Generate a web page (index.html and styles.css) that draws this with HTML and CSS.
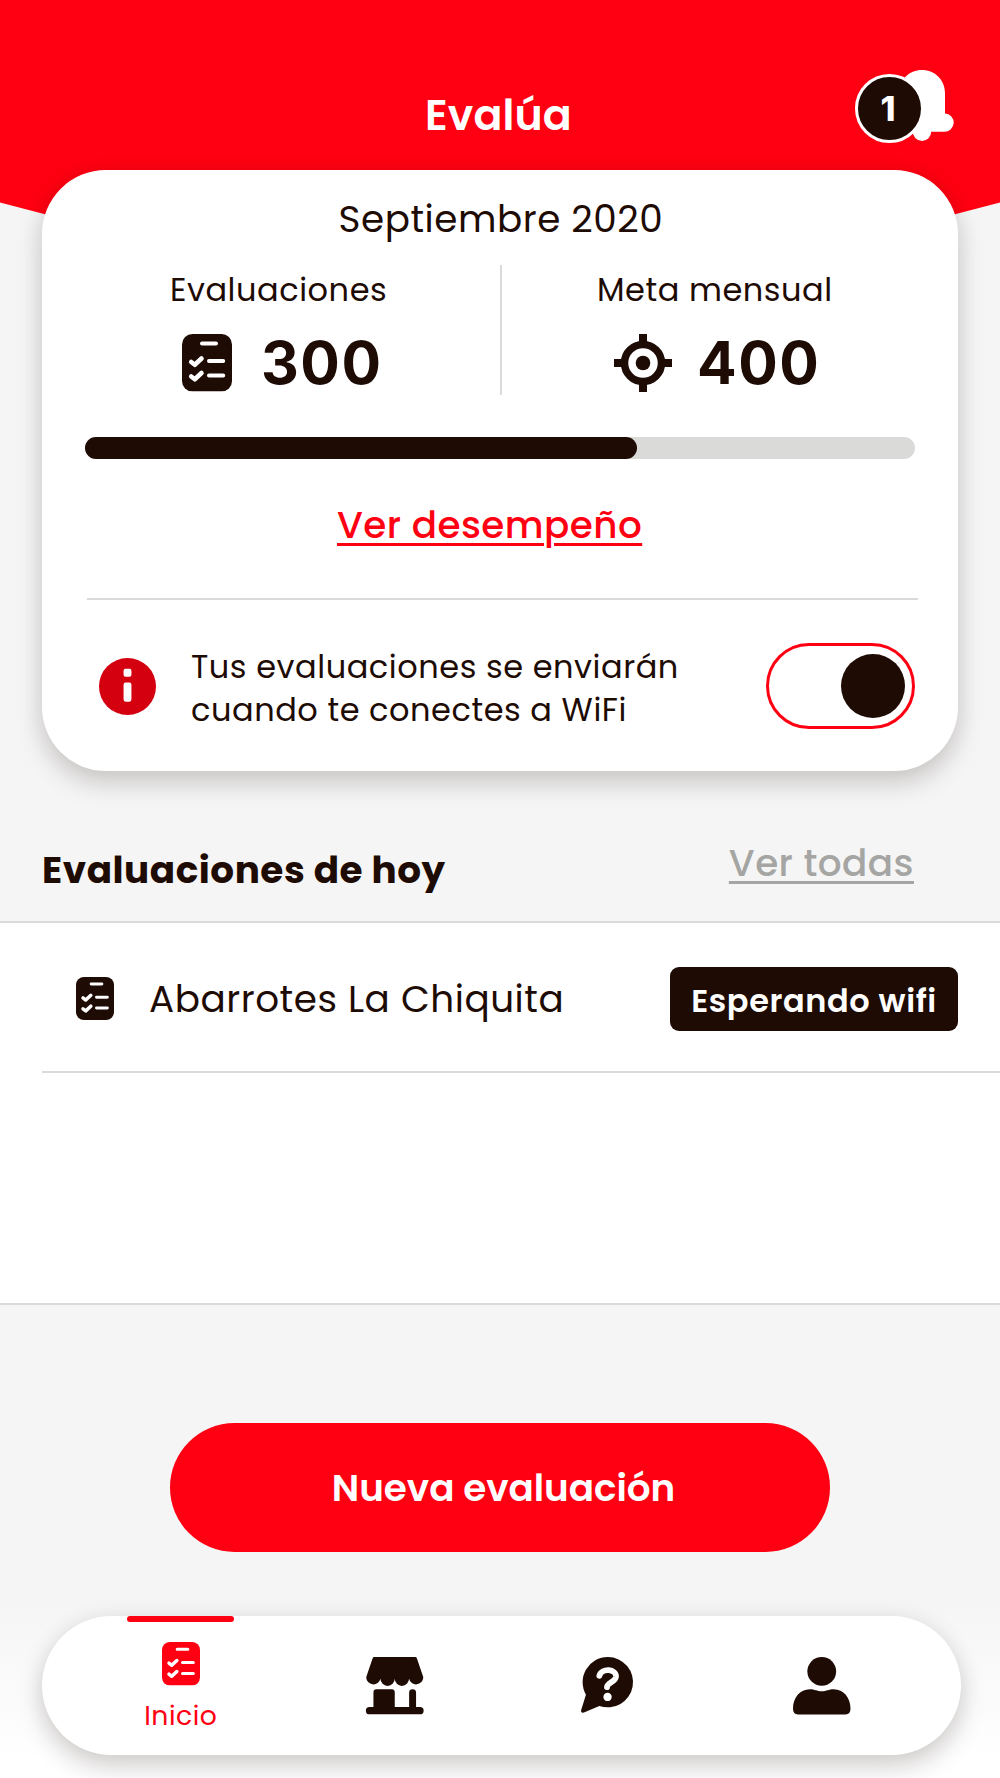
FILE: index.html
```html
<!DOCTYPE html>
<html lang="es">
<head>
<meta charset="utf-8">
<title>Evalúa</title>
<link rel="stylesheet" href="styles.css">
</head>
<body>
<svg class="sprite" aria-hidden="true">
  <symbol id="checklist" viewBox="0 0 50 57.5" preserveAspectRatio="none">
    <rect width="50" height="57.5" rx="10.5" fill="currentColor"/>
    <g fill="none" stroke="#fff" stroke-linecap="round" stroke-linejoin="round">
      <path d="M20 9.500H34M27 27H41.200M27 41.500H41.200" stroke-width="4"/>
      <path d="M9.200 28L12.800 30.800L19.500 24.500M9.200 42.500L12.800 45.300L19.500 39" stroke-width="4.600"/>
    </g>
  </symbol>
</svg>
<div class="screen">
  <header class="header">
    <h1 class="title">Evalúa</h1>
    <div class="bell">
      <svg class="bell-icon" viewBox="0 0 62 72" fill="#fff"><path d="M31 0C18 0 8 10 8 23V43.500A9 9 0 0 0 9 61.800H21.800A9.200 9.200 0 0 0 40.200 61.800H53A9.200 9.200 0 0 0 54 43.400V23C54 10 44 0 31 0Z"/></svg>
      <span class="badge">1</span>
    </div>
  </header>

  <section class="card">
    <h2 class="month">Septiembre 2020</h2>
    <div class="stats">
      <div class="stat">
        <div class="stat-label">Evaluaciones</div>
        <div class="stat-value"><svg class="i-check"><use href="#checklist"/></svg><span class="number">300</span></div>
      </div>
      <div class="stat stat-goal">
        <div class="stat-label">Meta mensual</div>
        <div class="stat-value">
          <svg class="i-target" viewBox="0 0 58 58"><path d="M29 0V10M29 48V58M0 29H10M48 29H58" stroke="currentColor" stroke-width="8"/><circle cx="29" cy="29" r="18.500" fill="none" stroke="currentColor" stroke-width="7.500"/><circle cx="29" cy="29" r="7.300" fill="currentColor"/></svg>
          <span class="number">400</span>
        </div>
      </div>
    </div>
    <div class="progress"><div class="progress-fill" style="width:66.5%"></div></div>
    <a class="performance">Ver desempeño</a>
    <div class="notice">
      <svg class="i-info" viewBox="0 0 58 58"><circle cx="29" cy="29" r="29" fill="#d40010"/><path d="M27 11H31Q33 11 33 13V17Q33 19 31 19H27Q25 19 25 17V13Q25 11 27 11ZM27 25H31Q33 25 33 27V42Q33 44.500 31 44.500H27Q25 44.500 25 42V27Q25 25 27 25Z" fill="#fff"/></svg>
      <p class="notice-text">Tus evaluaciones se enviarán<br>cuando te conectes a WiFi</p>
      <div class="toggle"><div class="knob"></div></div>
    </div>
  </section>

  <div class="section-head">
    <h2 class="today">Evaluaciones de hoy</h2>
    <a class="all">Ver todas</a>
  </div>
  <div class="list">
    <div class="row">
      <svg class="i-row"><use href="#checklist"/></svg>
      <span class="row-name">Abarrotes La Chiquita</span>
      <span class="status">Esperando wifi</span>
    </div>
  </div>

  <button class="cta">Nueva evaluación</button>

  <nav class="nav">
    <a class="tab tab-active"><svg class="i-tab"><use href="#checklist"/></svg><span class="tab-label">Inicio</span></a>
    <a class="tab"><svg viewBox="0 0 58 58" class="i-nav" fill="currentColor"><path d="M8.500 0H49.500Q51 0 51.400 1.400L57.800 20.500A7.300 7.300 0 0 1 43.400 22A7.200 7.200 0 0 1 29 22A7.200 7.200 0 0 1 14.600 22A7.300 7.300 0 0 1 .2 20.500L6.600 1.400Q7 0 8.500 0Z"/><path d="M7.500 35.500Q7.500 32.500 10.500 32.500H26Q29 32.500 29 35.500V50.500H43.500V36A3.500 3.500 0 0 1 50.500 36V50.500H54.500A3.600 3.600 0 0 1 54.500 57.800H3.500A3.600 3.600 0 0 1 3.500 50.500H7.500Z"/></svg></a>
    <a class="tab"><svg viewBox="0 0 58 58" class="i-nav" fill="currentColor"><path d="M29.200 0A25.400 25.400 0 1 1 20.500 49.300L5 56Q1.600 56.800 2.200 53.500L7 38A25.400 25.400 0 0 1 29.200 0Z"/><path d="M20.500 19C23 10.500 38 12 37.300 20C36.500 25.500 28.500 25.500 28.200 30.500" fill="none" stroke="#fff" stroke-width="5.800" stroke-linecap="round"/><circle cx="28.800" cy="40.300" r="4.200" fill="#fff"/></svg></a>
    <a class="tab"><svg viewBox="0 0 58 58" class="i-nav" fill="currentColor"><circle cx="29" cy="14.500" r="14.500"/><path d="M0 52C0 41 7 32.500 17 32.500C22 32.500 24 34.500 29 34.500C34 34.500 36 32.500 41 32.500C51 32.500 58 41 58 52Q58 58 53 58H5Q0 58 0 52Z"/></svg></a>
  </nav>
</div>
</body>
</html>
```
FILE: styles.css
```css
* { box-sizing: border-box; }
body { margin: 0; font-family: Poppins, Inter, sans-serif; color: #1d0b04; }
h1, h2, p { margin: 0; font-weight: 400; }
.sprite { position: absolute; width: 0; height: 0; }
svg { display: block; flex: none; overflow: visible; }
.screen { width: 1000px; height: 1778px; overflow: hidden; display: flex; flex-direction: column; background: linear-gradient(#f5f5f5 1600px, #fff 1760px); letter-spacing: .54px; }

/* Header with the wedge that continues behind the card */
.header { position: relative; flex: none; height: 170px; padding: 70px 47px 0 425px; display: flex; justify-content: space-between; align-items: flex-start; color: #fff; }
.header::before { content: ""; position: absolute; inset: 0 0 auto; height: 320px; background: #ff0012; clip-path: polygon(0 0, 100% 0, 100% 202.500px, 55% 320px, 45% 320px, 0 202.500px); }
.title { position: relative; font-size: 42.67px; font-weight: 600; line-height: 90px; letter-spacing: .1px; white-space: nowrap; }
.bell { position: relative; width: 98px; height: 72px; display: flex; justify-content: flex-end; }
.bell-icon { width: 62px; height: 72px; }
.badge { position: absolute; left: 0; top: 4px; width: 69px; height: 69px; padding-right: 3px; border: 3px solid #fff; border-radius: 50%; background: #1d0b04; font: 800 34px/64px Inter, sans-serif; letter-spacing: 0; text-align: center; }

/* Summary card */
.card { position: relative; flex: none; height: 601px; margin: 0 42px; padding-top: 27px; border-radius: 64px; background: #fff; box-shadow: 0 12px 26px rgba(29, 11, 4, .18), 0 0 24px rgba(29, 11, 4, .05); white-space: nowrap; }
.month { font-size: 37.33px; line-height: 44px; padding-left: 296.500px; }
.stats { display: grid; grid-template-columns: 458px 458px; height: 130px; margin-top: 24px; }
.stat { padding: 7px 0 0 128px; }
.stat-goal { border-left: 2px solid #dadad8; padding-left: 95px; }
.stat-label { font-size: 32px; line-height: 36px; }
.stat-value { display: flex; align-items: center; height: 58px; margin-top: 26px; padding-left: 12px; font: 650 58.67px/58px Inter, sans-serif; letter-spacing: 1.5px; }
.number { padding-bottom: 1px; }
.stat-goal .stat-value { padding-left: 17px; }
.i-check { width: 50px; height: 57.500px; margin-right: 29px; }
.i-target { width: 58px; height: 58px; margin-right: 25px; }
.progress { height: 22px; margin: 42px 43px 0; border-radius: 11px; background: #dadad8; }
.progress-fill { height: 100%; border-radius: 11px; background: #1d0b04; }
.performance { display: block; width: max-content; margin: 44px 0 0 295px; font-size: 37.33px; font-weight: 500; line-height: 44px; color: #ff0012; text-decoration: underline 2.5px; text-underline-offset: 5px; letter-spacing: .44px; }
.notice { display: flex; align-items: center; margin: 51px 40px 0 45px; padding: 43px 3px 0 12px; border-top: 2px solid #dadad8; }
.i-info { width: 57px; height: 57px; }
.notice-text { flex: 1; margin: 0 0 -3px 35px; padding-top: 3px; font-size: 32px; line-height: 42.67px; }
.toggle { display: flex; justify-content: flex-end; align-items: center; width: 149px; height: 86px; padding-right: 7px; border: 3.5px solid #ff0012; border-radius: 43px; }
.knob { width: 64px; height: 64px; border-radius: 50%; background: #1d0b04; }

/* Today's evaluations */
.section-head { flex: none; display: flex; justify-content: space-between; height: 150px; padding: 77px 86px 0 42px; white-space: nowrap; }
.today { font-size: 37.33px; font-weight: 700; line-height: 44px; }
.all { height: 44px; margin-top: -7px; font-size: 37.33px; font-weight: 500; line-height: 44px; color: #a5a5a3; text-decoration: underline 2.5px; text-underline-offset: 5px; letter-spacing: .44px; }
.list { flex: none; height: 384px; border: solid #dadad8; border-width: 2.500px 0; background: #fff; }
.row { display: flex; align-items: center; height: 150px; margin-left: 42px; padding: 3px 42px 0 34px; border-bottom: 2px solid #dadad8; white-space: nowrap; }
.i-row { width: 38px; height: 43px; }
.row-name { flex: 1; margin-left: 35px; font-size: 37.33px; line-height: 44px; }
.status { width: 288px; height: 64px; border-radius: 9px; background: #1d0b04; color: #fff; font-size: 32px; font-weight: 600; line-height: 68px; letter-spacing: .6px; text-align: center; }

.cta { flex: none; width: 660px; height: 129px; margin: 118px auto 0; padding: 0 0 0 7px; border: 0; border-radius: 65px; background: #ff0012; color: #fff; font: 600 37.33px/44px Poppins, Inter, sans-serif; letter-spacing: -.05px; }

/* Bottom navigation */
.nav { flex: none; display: flex; height: 139px; margin: 64px 39px 0 42px; padding-left: 32px; border-radius: 70px; background: #fff; box-shadow: 0 12px 26px rgba(29, 11, 4, .18), 0 0 24px rgba(29, 11, 4, .05); }
.tab { width: 213.700px; display: flex; justify-content: center; padding-top: 41px; }
.tab-active { position: relative; flex-direction: column; justify-content: flex-start; align-items: center; padding-top: 26px; color: #ff0012; font-size: 26.67px; line-height: 30px; }
.tab-active::before { content: ""; position: absolute; top: 0; left: 53px; width: 107px; height: 6px; border-radius: 3px; background: #ff0012; }
.tab-label { margin-top: 15px; }
.i-tab { width: 38px; height: 43.500px; }
.i-nav { width: 57.500px; height: 57.500px; }
```
